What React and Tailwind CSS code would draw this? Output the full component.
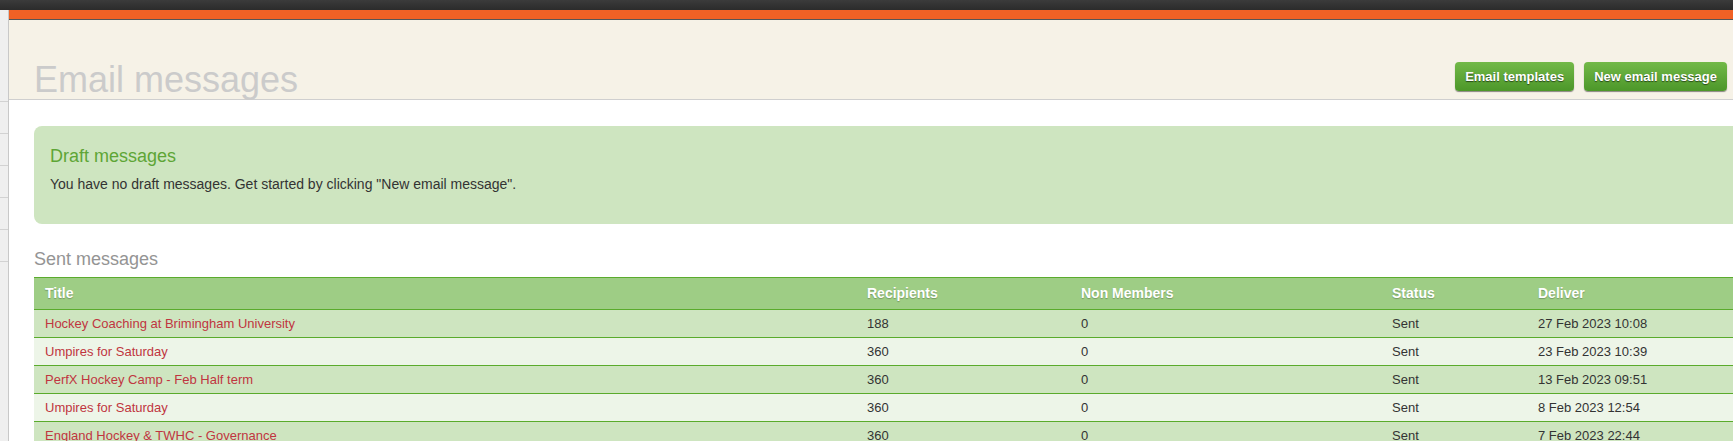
import React from "react";

const rows = [
  { title: "Hockey Coaching at Brimingham University", recipients: "188", nonMembers: "0", status: "Sent", deliver: "27 Feb 2023 10:08" },
  { title: "Umpires for Saturday", recipients: "360", nonMembers: "0", status: "Sent", deliver: "23 Feb 2023 10:39" },
  { title: "PerfX Hockey Camp - Feb Half term", recipients: "360", nonMembers: "0", status: "Sent", deliver: "13 Feb 2023 09:51" },
  { title: "Umpires for Saturday", recipients: "360", nonMembers: "0", status: "Sent", deliver: "8 Feb 2023 12:54" },
  { title: "England Hockey & TWHC - Governance", recipients: "360", nonMembers: "0", status: "Sent", deliver: "7 Feb 2023 22:44" },
];

const cols = "grid grid-cols-[822px_214px_311px_146px_1fr]";

const GreenButton = ({ children }) => (
  <button className="h-[29px] px-[10px] rounded-[4px] bg-gradient-to-b from-[#72b948] to-[#4c9729] text-white text-[13px] font-bold shadow-[0_1px_1px_rgba(0,0,0,0.45)] [text-shadow:0_1px_1px_rgba(0,0,0,0.55)]">
    {children}
  </button>
);

const App = () => {
  return (
    <div className="w-[1733px] h-[441px] overflow-hidden bg-white font-['Liberation_Sans',Arial,sans-serif] text-[#333]">
      <div className="h-[10px] bg-gradient-to-b from-[#3b3b3b] to-[#2b2b2b]" />
      <div className="flex">
        <aside className="w-[9px] shrink-0 h-[431px] bg-[#efefef] border-r border-[#c8c8c8]">
          <div className="h-[92px] border-b border-[#d2d2d2]" />
          {Array.from({ length: 5 }).map((_, i) => (
            <div key={i} className="h-[32px] border-b border-[#d2d2d2]" />
          ))}
        </aside>
        <main className="flex-1 min-w-0">
          <div className="h-[10px] bg-[#f06125] border-b border-[#555]" />
          <header className="h-[80px] bg-[#f6f2e7] border-b border-[#cfcfcf] flex items-end justify-between pl-[25px] pr-[6px]">
            <h1 className="text-[36px] leading-[36px] text-[#cbcbcb] pb-[1px]">Email messages</h1>
            <div className="flex gap-[10px] mb-[8px]">
              <GreenButton>Email templates</GreenButton>
              <GreenButton>New email message</GreenButton>
            </div>
          </header>

          <div className="w-[1760px] pl-[25px]">
            <section className="mt-[26px] h-[98px] rounded-[8px] bg-[#cee5c0] pl-[16px] pt-[20px]">
              <h2 className="text-[18px] leading-[20px] text-[#5ea536]">Draft messages</h2>
              <p className="mt-[8px] text-[14px] leading-[20px] text-[#333]">
                You have no draft messages. Get started by clicking "New email message".
              </p>
            </section>

            <h2 className="mt-[25px] mb-[8px] text-[18px] leading-[20px] text-[#949494]">Sent messages</h2>

            <div className="border-t border-[#5aab2c]">
              <div className={`${cols} h-[32px] items-center bg-[#9ecd85] border-b border-[#5aab2c] text-white text-[14px] font-bold [text-shadow:0_1px_1px_rgba(0,0,0,0.25)]`}>
                <div className="pl-[11px]">Title</div>
                <div className="pl-[11px]">Recipients</div>
                <div className="pl-[11px]">Non Members</div>
                <div className="pl-[11px]">Status</div>
                <div className="pl-[11px]">Deliver</div>
              </div>
              {rows.map((r, i) => (
                <div
                  key={i}
                  className={`${cols} h-[28px] items-center border-b border-[#5aab2c] text-[13px] ${i % 2 === 0 ? "bg-[#cee5c0]" : "bg-[#edf5e8]"}`}
                >
                  <div className="pl-[11px] text-[#c0353f]">{r.title}</div>
                  <div className="pl-[11px]">{r.recipients}</div>
                  <div className="pl-[11px]">{r.nonMembers}</div>
                  <div className="pl-[11px]">{r.status}</div>
                  <div className="pl-[11px]">{r.deliver}</div>
                </div>
              ))}
            </div>
          </div>
        </main>
      </div>
    </div>
  );
};

export default App;
